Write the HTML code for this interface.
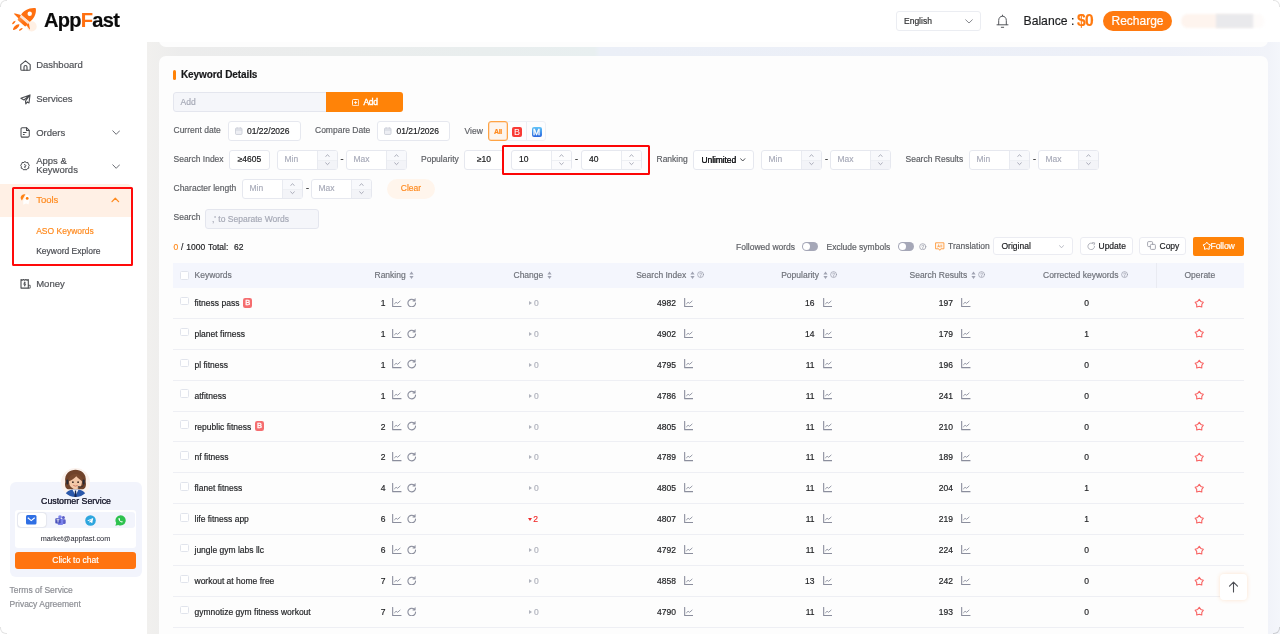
<!DOCTYPE html>
<html lang="en"><head><meta charset="utf-8"><title>AppFast - Keyword Details</title>
<style>
*{box-sizing:border-box;margin:0;padding:0}
html,body{width:1280px;height:634px;overflow:hidden;background:#fff}
body{font-family:"Liberation Sans",sans-serif;font-size:8.5px;color:#303133;position:relative;-webkit-font-smoothing:antialiased;-webkit-text-stroke:0.18px}
.abs,.abs>*{position:absolute}
#main{position:absolute;left:147px;top:42px;width:1133px;height:592px;background:linear-gradient(90deg,#f1f0ee 0,#ececec 3%,#e9eeee 30%,#e8eff0 39.5%,#ebeff7 40%,#edf0f8 90%,#f1f3f9 99%,#f4f6fb 100%)}
#prev{position:absolute;left:159px;top:36px;width:1109px;height:11px;background:#fdfdfd;border-radius:0 0 7px 7px}
#cardbg{position:absolute;left:159px;top:56px;width:1109px;height:600px;background:#fdfdfd;border-radius:7px 7px 0 0}
#card{position:absolute;left:160px;top:56px;width:1108px;height:600px}
#card>*{position:absolute}
#side{position:absolute;left:0;top:42px;width:147px;height:592px;background:#fff}
#side>*{position:absolute}
#head{position:absolute;left:0;top:0;width:1280px;height:42px;background:#fff}
#head>*{position:absolute}
#head,#side,#card{will-change:transform}
.mi{left:36.2px;font-size:9.5px;color:#505257;white-space:nowrap;line-height:11px}
.sub{left:36.2px;font-size:8.5px;color:#4a4c52;white-space:nowrap;line-height:10px}
.sic{left:20px;width:11px;height:11px;fill:none;stroke:#4a4c50;stroke-width:1.1;stroke-linecap:round;stroke-linejoin:round}
.chev{width:8.4px;height:5.4px;fill:none;stroke:#6a6c73;stroke-width:1.1;stroke-linecap:round;stroke-linejoin:round}
.lbl{color:#5d5f64;font-size:8.5px;line-height:10px;white-space:nowrap;margin-top:0.4px}
.box{border:1px solid #e6e8ef;border-radius:3px;background:#fff;height:20px;font-size:8.5px;line-height:17.2px;white-space:nowrap}
.ni{position:absolute;height:20px;border:1px solid #e6e8ef;border-radius:3px;background:#fff;font-size:8.5px;line-height:17.2px}
.ni .ph{position:absolute;left:6.5px;color:#a9acba}
.ni .val{position:absolute;left:7px;color:#17181a}
.ni .spin{position:absolute;right:0;top:0;width:20px;height:18px;border-left:1px solid #e9ebf1;background:#f8f9fc;border-radius:0 2px 2px 0}
.ni.wh .spin{background:#fdfdfe}
.ni.wh .spin:after{background:#fbfbfd}
.ni .spin:after{content:"";position:absolute;left:0;right:0;top:9px;height:8px;background:#f3f4f8;border-top:1px solid #eef0f4}
.ni .spin svg{position:absolute;z-index:1;left:7px;width:5px;height:3.4px;fill:none;stroke:#9497a6;stroke-width:0.95;stroke-linecap:round;stroke-linejoin:round}
.ni .spin svg:first-child{top:3px}
.ni .spin svg:last-child{top:11.2px}
.dash{font-size:9px;color:#303133;line-height:10px}
#th{left:13px;top:207px;width:1071px;height:25px;background:#f4f6fd;color:#6f727a;font-size:8.5px}
#th>*{position:absolute;top:6.8px;line-height:10px;white-space:nowrap}
.sort{display:inline-block;width:5px;height:8.5px;fill:#a0a3b2;vertical-align:-1.6px;margin-left:3.5px}
.q{display:inline-block;width:7.2px;height:7.2px;fill:none;stroke:#9497a5;stroke-width:0.75;stroke-linecap:round;vertical-align:-0.8px;margin-left:2.5px}
.tr{position:absolute;left:13px;width:1071px;height:30.89px;border-bottom:1px solid #eeeff4;font-size:8.5px}
.tr>*{position:absolute}
.cb{display:block;width:8.5px;height:8.5px;border:1px solid #e1e4ec;border-radius:1.5px;background:#fff}
.kw{left:21.5px;top:10px;line-height:10px;color:#1f2023;white-space:nowrap}
.num{top:10px;line-height:10px;color:#1f2023;white-space:nowrap}
.pi{top:9.7px;width:9.5px;height:9.5px}
.ic{display:block;width:9.5px;height:9.5px;fill:none;stroke:#8b8e9d;stroke-width:1.15;stroke-linecap:round;stroke-linejoin:round}
.ic.star{stroke:#f86464;stroke-width:1.05;width:10.5px;height:10.5px}
.chg{top:10px;line-height:10px;color:#b0b3bd;white-space:nowrap;padding-left:5px}
.chg.red{color:#f02d2d}
.tri{position:absolute;left:0;top:3px;border-left:3px solid #b0b3bd;border-top:2.2px solid transparent;border-bottom:2.2px solid transparent}
.trid{position:absolute;left:0;top:4px;border-top:3px solid #f02d2d;border-left:2.2px solid transparent;border-right:2.2px solid transparent}
.bb{display:inline-block;width:9.6px;height:10px;margin-left:3.5px;border-radius:2.2px;background:#f56d6f;color:#fff;font-size:7.5px;line-height:10.5px;text-align:center;font-weight:normal;-webkit-text-stroke:0.3px #fff;vertical-align:0px;position:relative;top:-1.3px}
.btn{border:1px solid #ebecf2;border-radius:3px;background:#fff;height:18px;font-size:8.5px;line-height:16px;color:#303133;white-space:nowrap}
.tog{width:16px;height:9px;border-radius:5px;background:#a5a7b7}
.tog:after{content:"";position:absolute;left:1px;top:1px;width:7px;height:7px;border-radius:50%;background:#fff}
</style></head><body>
<div id="main"></div>
<div id="prev"></div>
<div id="cardbg"></div>

<!-- ===== header ===== -->
<div id="head">
<svg style="left:11px;top:7px;width:26px;height:26px" viewBox="0 0 26 26">
<defs><linearGradient id="rg" x1="0" y1="0" x2="1" y2="1"><stop offset="0" stop-color="#ff9a55"/><stop offset="0.6" stop-color="#ff6f0f"/></linearGradient></defs>
<circle cx="20.6" cy="19.4" r="5.1" fill="#fff0e4"/>
<g fill="#ff6f0f">
<path d="M10.1 7.8C12.6 3.8 17.5 0.7 24 1.1C24.6 1.1 24.9 1.5 24.9 2.1C25.3 7.5 22.6 12.2 18.7 15.1Z"/>
<path d="M10.1 7.8L18.7 15.1L17.1 17.3L8.6 9.7Z" fill="#ffe3cf"/>
<path d="M8.6 9.7L17.1 17.3L14.6 19.2C14.2 19.5 13.8 19.4 13.5 19.1L6.9 13.2C6.6 12.9 6.6 12.5 6.9 12.1Z" fill="url(#rg)"/>
<path d="M2.8 6.7C3.2 6.3 3.8 6.4 4.4 6.5L10 8L7.8 11.8Z"/>
<path d="M15.4 17.9L17.9 16.3L18.9 21.8C19 22.6 18.5 22.7 18.1 22.1Z"/>
<path d="M1.2 17.2C0.8 16 2.8 13.8 4.6 13.7C4.7 15 2.7 17.2 1.2 17.2Z"/>
<path d="M2.1 22.9C1.5 20.8 5.4 16.8 8.3 17.3C8.9 19.5 4.8 23.3 2.1 22.9Z"/>
<path d="M8 23.8C7.8 22.6 9.9 20.9 11.6 21.1C11.7 22.4 9.6 24 8 23.8Z"/>
</g>
<circle cx="18.7" cy="6.7" r="2.2" fill="#fff"/>
</svg>
<div style="left:44px;top:6.5px;font-size:20px;line-height:26px;font-weight:bold;color:#0b0b0b;letter-spacing:-0.7px;white-space:nowrap">App<span style="color:#ff6f0f">F</span>ast</div>

<div class="box" style="left:896px;top:11px;width:85px;height:20px;border-radius:3px;border-color:#ebedf2"></div>
<div style="left:904px;top:15.5px;font-size:8.5px;line-height:10px;color:#303133">English</div>
<svg class="chev" style="left:964.5px;top:18.5px;width:8px;height:5px;stroke:#6a6c72;stroke-width:0.8" viewBox="0 0 8 5"><path d="M0.7 0.8L4 4L7.3 0.8"/></svg>
<svg style="left:995.5px;top:13.5px;width:13px;height:15px;fill:none;stroke:#55575c;stroke-width:1;stroke-linecap:round;stroke-linejoin:round" viewBox="0 0 13 15"><path d="M6.5 1.1V2M2.7 10.7V6.4C2.7 3.9 4.3 2.2 6.5 2.2S10.3 3.9 10.3 6.4V10.7M1 10.8H12M5.3 13.3H7.7"/></svg>
<div style="left:1023.5px;top:13.5px;font-size:12.2px;line-height:15px;color:#1d1e20;white-space:nowrap">Balance :</div>
<div style="left:1077px;top:12px;font-size:15.6px;line-height:18px;font-weight:bold;color:#ff7a10;white-space:nowrap;letter-spacing:-0.55px">$0</div>
<div style="left:1103px;top:11px;width:69px;height:20px;border-radius:10px;background:#ff7a10;color:#fff;font-size:12px;line-height:20px;text-align:center">Recharge</div>
<div style="left:1181px;top:14px;width:84px;height:14px;border-radius:7px;background:linear-gradient(90deg,#fef4ee 0,#fef4ee 42%,#fdf8f5 60%,#fefcfb 100%);filter:blur(1.2px)"></div>
<div style="left:1216px;top:13.5px;width:37px;height:14.5px;background:#e9e9ec;filter:blur(1px)"></div>
</div>

<!-- ===== sidebar ===== -->
<div id="side">
<svg class="sic" style="top:17.5px" viewBox="0 0 11 11"><path d="M0.8 4.7L5.5 0.8L10.2 4.7V9.2C10.2 9.9 9.8 10.3 9.1 10.3H1.9C1.2 10.3 0.8 9.9 0.8 9.2Z"/><path d="M4 10.2V6.9C4 5 7 5 7 6.9V10.2"/></svg>
<div class="mi" style="top:16.8px">Dashboard</div>
<svg class="sic" style="top:52px" viewBox="0 0 11 11"><path d="M10 0.9L0.9 4.3L4 6L9.8 1.1L5.5 7L5.8 10L7.3 7.9L9 9Z"/></svg>
<div class="mi" style="top:50.8px">Services</div>
<svg class="sic" style="top:85px;left:20.3px;width:10.2px;height:10.8px" preserveAspectRatio="none" viewBox="0 0 11 11"><path d="M2.4 0.7H7L10 3.5V9C10 9.8 9.5 10.3 8.7 10.3H2.4C1.6 10.3 1.1 9.8 1.1 9V2C1.1 1.2 1.6 0.7 2.4 0.7Z"/><path d="M7 0.9V3.5H9.8M3.6 5.6H6.6M3.6 7.6H4.6"/></svg>
<div class="mi" style="top:84.5px">Orders</div>
<svg class="chev" style="left:112px;top:88.2px" viewBox="0 0 9 6"><path d="M0.7 0.9L4.5 4.8L8.3 0.9"/></svg>
<svg class="sic" style="top:119px;left:20.4px;width:10px;height:10px" viewBox="0 0 11 11"><path d="M5.5 0.7L6.9 1.7L8.7 1.6L9.1 3.3L10.3 4.6L9.5 6.1L9.7 7.9L8 8.5L6.9 9.9L5.5 9.3L4.1 9.9L3 8.5L1.3 7.9L1.5 6.1L0.7 4.6L1.9 3.3L2.3 1.6L4.1 1.7Z"/><path d="M4.9 3.9C6.9 3.6 7.1 6.3 5.2 6.6M5.6 6.1L5 6.7L5.7 7.2"/></svg>
<div class="mi" style="top:114px;line-height:9.2px">Apps &amp;<br>Keywords</div>
<svg class="chev" style="left:112px;top:121.7px" viewBox="0 0 9 6"><path d="M0.7 0.9L4.5 4.8L8.3 0.9"/></svg>

<div style="left:0;top:141.5px;width:132px;height:33px;background:#fff0e5;border-radius:0 5px 0 0"></div>
<svg style="left:20px;top:151.5px;width:11px;height:12px" viewBox="0 0 11 12"><path d="M6.3 0.5C9.3 0.3 11 3.4 9.3 6.6L8.6 10.6L6 9.6L3.3 10.8L3.2 7Z" fill="#fff" opacity="0.9"/><path d="M5.4 0.3C1.5 -0.2 -1 3.6 1.9 6.4Z" fill="#ff8214"/><circle cx="7.2" cy="4.4" r="1.4" fill="#ff7a0a"/></svg>
<div class="mi" style="top:151.8px;color:#ff8a1e">Tools</div>
<svg class="chev" style="left:111.3px;top:155.2px;width:8.6px;height:5.5px;stroke:#ff8a1e;stroke-width:1.4" viewBox="0 0 9 6"><path d="M0.9 5L4.5 1.4L8.1 5"/></svg>
<div class="sub" style="top:184px;color:#ff8a1e">ASO Keywords</div>
<div class="sub" style="top:204px">Keyword Explore</div>
<div style="left:11.7px;top:145px;width:121px;height:78.5px;border:2px solid #ff0a0a;border-radius:1.5px"></div>

<svg class="sic" style="top:236px" viewBox="0 0 11 11"><path d="M1 1.5L2.2 2.3L3.4 1.5L4.65 2.3L5.9 1.5L7.1 2.3L8.3 1.5V10.1H1Z"/><path d="M5.6 4.9C5.2 4.3 3.8 4.4 3.8 5.2C3.8 6.1 5.6 5.7 5.6 6.7C5.6 7.5 4.1 7.6 3.7 6.9M4.7 4V8M8.5 7.3H10.2V10.1H8.3" stroke-width="0.85"/></svg>
<div class="mi" style="top:236px">Money</div>

<!-- customer service -->
<div style="left:10px;top:439.5px;width:132px;height:95.5px;border-radius:6px;background:#f2f4fc"></div>
<svg style="left:61px;top:425.8px;width:29px;height:29px" viewBox="0 0 29 29">
<defs><clipPath id="avc"><circle cx="14.5" cy="14.5" r="14.5"/></clipPath></defs>
<g clip-path="url(#avc)">
<rect width="29" height="29" fill="#fbf2ed"/>
<path d="M4.3 14C3 5 9.5 1.7 14.5 1.7S26 5 24.7 14C25.6 18 24.3 21.3 21 21.3H8C4.7 21.3 3.4 18 4.3 14Z" fill="#70432a"/>
<rect x="12.3" y="19" width="4.4" height="4.5" fill="#e6b291"/>
<path d="M3.5 30C4 23.5 8.5 21.6 14.5 21.6S25 23.5 25.5 30Z" fill="#2b58aa"/>
<path d="M11.4 21.6H17.6L14.5 27.5Z" fill="#f7f7fa"/>
<path d="M13.9 22.6H15.1L15.6 29H13.4Z" fill="#18264f"/>
<ellipse cx="14.5" cy="13.9" rx="6.5" ry="7.1" fill="#f4c8a8"/>
<path d="M7.6 13.2C7.6 8 11 6 14.5 6S21.4 8 21.4 13.2C19.5 12 17 10.5 15.3 8.3C13.5 10.5 10.5 12.5 7.6 13.2Z" fill="#7a4a2e"/>
<circle cx="11.9" cy="14.2" r="0.85" fill="#33211a"/><circle cx="17.1" cy="14.2" r="0.85" fill="#33211a"/>
<path d="M12.6 17.6Q14.5 18.9 16.4 17.6" stroke="#c2604f" stroke-width="0.7" fill="none" stroke-linecap="round"/>
<rect x="5.3" y="11.5" width="2" height="5" rx="1" fill="#2a2a33"/><rect x="21.7" y="11.5" width="2" height="5" rx="1" fill="#2a2a33"/>
<path d="M22.7 16.3Q22.5 19.3 18.5 19.1" stroke="#2a2a33" stroke-width="0.7" fill="none"/>
<ellipse cx="17.9" cy="19" rx="1.3" ry="0.8" fill="#1f1f27"/>
</g></svg>
<div style="left:9.5px;top:453.9px;width:133px;text-align:center;font-size:8.8px;line-height:11px;color:#14152a;white-space:nowrap;text-shadow:0 0 1px #fff, 0 0 0.3px #14152a">Customer Service</div>
<div style="left:15px;top:468px;width:121px;height:37.5px;border-radius:3px;background:#fff"></div>
<div style="left:16.5px;top:469.5px;width:118px;height:16px;border-radius:3px;background:#f2f4fc"></div>
<div style="left:17.5px;top:470.5px;width:28px;height:14.5px;border-radius:3px;background:#fff;box-shadow:0 0 1.5px rgba(0,0,0,.25)"></div>
<svg style="left:26px;top:473px;width:10.5px;height:9.5px" viewBox="0 0 10.5 9.5"><rect width="10.5" height="9.5" rx="1.5" fill="#2f6fe4"/><path d="M1.8 2.8L5.25 5.6L8.7 2.8" fill="none" stroke="#fff" stroke-width="1.1"/></svg>
<svg style="left:55px;top:472.5px;width:11px;height:10.5px" viewBox="0 0 11 10.5"><circle cx="8.4" cy="2.6" r="1.5" fill="#5b5fc7"/><circle cx="5" cy="2" r="1.8" fill="#7b83eb"/><rect x="6" y="4.3" width="4.7" height="4.8" rx="1.3" fill="#5b5fc7"/><rect x="2.6" y="4" width="5.6" height="6" rx="1.3" fill="#7b83eb"/><rect x="0.3" y="3.2" width="5.4" height="5.4" rx="0.8" fill="#4b53bc"/><path d="M1.6 4.7H4.4M3 4.7V7.5" stroke="#fff" stroke-width="0.8" fill="none"/></svg>
<svg style="left:84.5px;top:472.5px;width:11px;height:11px" viewBox="0 0 11 11"><circle cx="5.5" cy="5.5" r="5.3" fill="#2ea6de"/><path d="M2.2 5.4L8.2 3L7.2 8.2L5.4 6.9L4.5 7.8L4.4 6.4L7 4.1L3.7 6Z" fill="#fff"/></svg>
<svg style="left:114.5px;top:472.5px;width:11px;height:11px" viewBox="0 0 11 11"><path d="M5.6 0.3A5.1 5.1 0 0 0 1.2 8L0.4 10.7L3.2 9.9A5.1 5.1 0 1 0 5.6 0.3Z" fill="#2ec24f"/><path d="M3.8 3.1C3.3 3.5 3.3 4.4 4.3 5.7S6.6 7.7 7.4 7.3C7.9 7 7.9 6.6 7.5 6.4L6.8 6.1L6.4 6.5C5.8 6.3 5 5.5 4.8 4.9L5.1 4.5L4.7 3.4C4.5 3 4.1 2.9 3.8 3.1Z" fill="#fff"/></svg>
<div style="left:15px;top:491.7px;width:121px;text-align:center;font-size:7.3px;line-height:9px;color:#2c2d38;white-space:nowrap;-webkit-text-stroke:0.05px">market@appfast.com</div>
<div style="left:15px;top:510px;width:121px;height:17px;border-radius:3px;background:#ff7410;color:#fff;font-size:8.5px;line-height:16.5px;text-align:center">Click to chat</div>
<div style="left:9.5px;top:543px;font-size:8.5px;line-height:10px;color:#8c8e94;white-space:nowrap">Terms of Service</div>
<div style="left:9.5px;top:557px;font-size:8.5px;line-height:10px;color:#8c8e94;white-space:nowrap">Privacy Agreement</div>
</div>

<!-- ===== main card ===== -->
<div id="card">
<div style="left:13px;top:14px;width:3px;height:10px;border-radius:1.5px;background:#ff8208"></div>
<div style="left:21px;top:12.5px;font-size:10px;line-height:12px;font-weight:bold;color:#17181a;white-space:nowrap;letter-spacing:-0.1px">Keyword Details</div>

<div style="left:13px;top:36px;width:154px;height:20px;border:1px solid #e4e6ee;border-radius:3px 0 0 3px;background:#f5f6fa"></div>
<div style="left:20.5px;top:41px;font-size:8.5px;line-height:10px;color:#a6a9b6">Add</div>
<div style="left:166px;top:36px;width:77px;height:20px;border-radius:0 3px 3px 0;background:#ff8308"></div>
<svg style="left:191.8px;top:42.5px;width:7.2px;height:7.2px;fill:none;stroke:#fff;stroke-width:0.9" viewBox="0 0 7.2 7.2"><rect x="0.5" y="0.5" width="6.2" height="6.2" rx="1"/><path d="M3.6 2.1V5.1M2.1 3.6H5.1"/></svg>
<div style="left:203.5px;top:41.3px;font-size:8.5px;line-height:10px;color:#fff;letter-spacing:-0.3px;-webkit-text-stroke:0.4px #fff">Add</div>

<div class="lbl" style="left:13.5px;top:69px">Current date</div>
<div class="box" style="left:68px;top:65px;width:73px;height:20px"></div>
<svg class="cal" style="left:75.3px;top:71px;width:7.5px;height:8px" viewBox="0 0 7 7.5"><rect x="0.4" y="1" width="6.2" height="6" rx="1" fill="#eeeff4" stroke="#c3c6d1" stroke-width="0.7"/><path d="M0.5 2.8H6.5M2 0.3V1.5M5 0.3V1.5" stroke="#c3c6d1" stroke-width="0.7"/></svg>
<div style="left:87px;top:69.8px;font-size:8.5px;line-height:10px;color:#1c1d20">01/22/2026</div>
<div class="lbl" style="left:155px;top:69px">Compare Date</div>
<div class="box" style="left:217px;top:65px;width:73px;height:20px"></div>
<svg class="cal" style="left:224.3px;top:71px;width:7.5px;height:8px" viewBox="0 0 7 7.5"><rect x="0.4" y="1" width="6.2" height="6" rx="1" fill="#eeeff4" stroke="#c3c6d1" stroke-width="0.7"/><path d="M0.5 2.8H6.5M2 0.3V1.5M5 0.3V1.5" stroke="#c3c6d1" stroke-width="0.7"/></svg>
<div style="left:236.5px;top:69.8px;font-size:8.5px;line-height:10px;color:#1c1d20">01/21/2026</div>
<div class="lbl" style="left:304.5px;top:69.5px">View</div>
<div style="left:328px;top:65px;width:58px;height:20px;border:1px solid #eef0f5;border-radius:3px;background:#fdfdfe"></div>
<div style="left:347px;top:66px;width:1px;height:18px;background:#ebedf3"></div>
<div style="left:366px;top:66px;width:1px;height:18px;background:#ebedf3"></div>
<div style="left:328px;top:65px;width:20px;height:20px;border:1px solid #ffa445;border-radius:3px;background:#fdf5ee;box-shadow:inset 0 0 0 0.5px #ffc590;color:#ff8a1e;font-size:7px;font-weight:bold;line-height:20px;text-align:center;letter-spacing:-0.3px">All</div>
<div style="left:352px;top:71px;width:10px;height:10px;border-radius:2px;background:#f93b36;color:#fff;font-size:9px;line-height:10.5px;font-weight:normal;text-align:center;-webkit-text-stroke:0">B</div>
<div style="left:371.5px;top:71px;width:10px;height:10px;border-radius:2px;background:linear-gradient(180deg,#60c4f8,#2a66de);color:#fff;font-size:8.5px;line-height:10.5px;font-weight:normal;text-align:center;-webkit-text-stroke:0.3px #fff">M</div>

<div class="lbl" style="left:13.5px;top:98px">Search Index</div>
<div class="box" style="left:69px;top:94px;width:41px;height:20px;text-align:center;color:#17181a">≥4605</div>
<div class="ni" style="left:117px;top:94px;width:61px;height:20px"><span class="ph">Min</span><span class="spin"><svg viewBox="0 0 6 4"><path d="M0.8 3L3 0.9L5.2 3"/></svg><svg viewBox="0 0 6 4"><path d="M0.8 1L3 3.1L5.2 1"/></svg></span></div>
<div class="dash" style="left:180.5px;top:98px">-</div>
<div class="ni" style="left:186px;top:94px;width:61px;height:20px"><span class="ph">Max</span><span class="spin"><svg viewBox="0 0 6 4"><path d="M0.8 3L3 0.9L5.2 3"/></svg><svg viewBox="0 0 6 4"><path d="M0.8 1L3 3.1L5.2 1"/></svg></span></div>
<div class="lbl" style="left:261px;top:98px">Popularity</div>
<div class="box" style="left:304px;top:94px;width:40px;height:20px;text-align:center;color:#17181a">≥10</div>
<div style="left:342px;top:88.5px;width:147.5px;height:30px;border:2px solid #fc0606;border-radius:1.5px;background:#fdfdfe"></div>
<div class="ni wh" style="left:351px;top:94px;width:61px;height:20px"><span class="val">10</span><span class="spin"><svg viewBox="0 0 6 4"><path d="M0.8 3L3 0.9L5.2 3"/></svg><svg viewBox="0 0 6 4"><path d="M0.8 1L3 3.1L5.2 1"/></svg></span></div>
<div class="dash" style="left:415px;top:98px">-</div>
<div class="ni wh" style="left:421px;top:94px;width:61px;height:20px"><span class="val">40</span><span class="spin"><svg viewBox="0 0 6 4"><path d="M0.8 3L3 0.9L5.2 3"/></svg><svg viewBox="0 0 6 4"><path d="M0.8 1L3 3.1L5.2 1"/></svg></span></div>
<div class="lbl" style="left:496.5px;top:98px">Ranking</div>
<div class="box" style="left:533px;top:94px;width:61px;height:20px"></div>
<div style="left:541.5px;top:98.5px;font-size:8.5px;line-height:10px;color:#1c1d20;letter-spacing:-0.1px;text-shadow:0 0 0.3px #1c1d20">Unlimited</div>
<svg class="chev" style="left:580px;top:102px;width:5.5px;height:4px;stroke:#3c3e44;stroke-width:0.9" viewBox="0 0 5.5 4"><path d="M0.6 0.7L2.75 3L4.9 0.7"/></svg>
<div class="ni" style="left:601px;top:94px;width:61px;height:20px"><span class="ph">Min</span><span class="spin"><svg viewBox="0 0 6 4"><path d="M0.8 3L3 0.9L5.2 3"/></svg><svg viewBox="0 0 6 4"><path d="M0.8 1L3 3.1L5.2 1"/></svg></span></div>
<div class="dash" style="left:665px;top:98px">-</div>
<div class="ni" style="left:670px;top:94px;width:61px;height:20px"><span class="ph">Max</span><span class="spin"><svg viewBox="0 0 6 4"><path d="M0.8 3L3 0.9L5.2 3"/></svg><svg viewBox="0 0 6 4"><path d="M0.8 1L3 3.1L5.2 1"/></svg></span></div>
<div class="lbl" style="left:745.5px;top:98px">Search Results</div>
<div class="ni" style="left:809px;top:94px;width:61px;height:20px"><span class="ph">Min</span><span class="spin"><svg viewBox="0 0 6 4"><path d="M0.8 3L3 0.9L5.2 3"/></svg><svg viewBox="0 0 6 4"><path d="M0.8 1L3 3.1L5.2 1"/></svg></span></div>
<div class="dash" style="left:873px;top:98px">-</div>
<div class="ni" style="left:878px;top:94px;width:61px;height:20px"><span class="ph">Max</span><span class="spin"><svg viewBox="0 0 6 4"><path d="M0.8 3L3 0.9L5.2 3"/></svg><svg viewBox="0 0 6 4"><path d="M0.8 1L3 3.1L5.2 1"/></svg></span></div>

<div class="lbl" style="left:13.5px;top:127px">Character length</div>
<div class="ni" style="left:82px;top:123px;width:61px;height:20px"><span class="ph">Min</span><span class="spin"><svg viewBox="0 0 6 4"><path d="M0.8 3L3 0.9L5.2 3"/></svg><svg viewBox="0 0 6 4"><path d="M0.8 1L3 3.1L5.2 1"/></svg></span></div>
<div class="dash" style="left:146px;top:127px">-</div>
<div class="ni" style="left:151px;top:123px;width:61px;height:20px"><span class="ph">Max</span><span class="spin"><svg viewBox="0 0 6 4"><path d="M0.8 3L3 0.9L5.2 3"/></svg><svg viewBox="0 0 6 4"><path d="M0.8 1L3 3.1L5.2 1"/></svg></span></div>
<div style="left:227px;top:122.5px;width:48px;height:20px;border-radius:10px;background:#fff5ec;color:#ff8a1e;font-size:8.5px;line-height:19px;text-align:center">Clear</div>

<div class="lbl" style="left:13.5px;top:156px">Search</div>
<div style="left:45px;top:153px;width:114px;height:20px;border:1px solid #e4e6ee;border-radius:3px;background:#f5f6fa"></div>
<div style="left:52px;top:157.5px;font-size:8.5px;line-height:10px;color:#a6a9b6;white-space:nowrap">,' to Separate Words</div>

<div style="left:13.5px;top:185.5px;font-size:8.5px;line-height:10px;color:#1c1d20;white-space:nowrap;word-spacing:0.4px;letter-spacing:0.03px"><span style="color:#ff8a1e">0</span> / 1000 Total:&nbsp; 62</div>

<div class="lbl" style="left:576px;top:185.5px">Followed words</div>
<div class="tog" style="left:642px;top:186px"></div>
<div class="lbl" style="left:666.5px;top:185.5px">Exclude symbols</div>
<div class="tog" style="left:737.5px;top:186px"></div>
<svg class="q" style="left:759px;top:186.5px;margin:0;width:7.5px;height:7.5px" viewBox="0 0 8 8"><circle cx="4" cy="4" r="3.3"/><path d="M2.9 3.2C2.9 2 5.1 2 5.1 3.2C5.1 4 4 4 4 4.9M4 5.7V6.1"/></svg>
<svg style="left:775px;top:185.5px;width:9.5px;height:9.5px;fill:none;stroke:#ff8a1e;stroke-width:0.8;stroke-linejoin:round" viewBox="0 0 9.5 9.5"><path d="M0.6 0.8H8.9V6.8H5.8L4.75 8.3L3.7 6.8H0.6Z"/><path d="M2.6 5.4L3.6 2.6L4.6 5.4M2.9 4.5H4.3M5.8 2.6V5.4M6.8 2.6V5.4" stroke-width="0.6"/></svg>
<div class="lbl" style="left:788px;top:184.5px">Translation</div>
<div class="btn" style="left:833px;top:181px;width:80px;height:18px"></div>
<div style="left:841.5px;top:184.5px;font-size:8.5px;line-height:10px;color:#1c1d20;white-space:nowrap">Original</div>
<svg class="chev" style="left:898.5px;top:188.5px;width:5px;height:3.5px;stroke:#a9acb8;stroke-width:0.8" viewBox="0 0 5 3.5"><path d="M0.5 0.6L2.5 2.8L4.5 0.6"/></svg>
<div class="btn" style="left:920px;top:181px;width:53px;height:18px"></div>
<svg style="left:927px;top:185.5px;width:8.5px;height:8.5px;fill:none;stroke:#8e919c;stroke-width:0.8;stroke-linecap:round;stroke-linejoin:round" viewBox="0 0 10 10"><path d="M8.9 5.2A3.9 3.9 0 1 1 7.2 1.9"/><path d="M6.6 0.6L9.2 1.1L8.3 3.5"/></svg>
<div style="left:938.5px;top:185px;font-size:8.5px;line-height:10px;color:#1c1d20">Update</div>
<div class="btn" style="left:979px;top:181px;width:47px;height:18px"></div>
<svg style="left:987px;top:185px;width:9px;height:9px;fill:none;stroke:#8e919c;stroke-width:0.8;stroke-linejoin:round" viewBox="0 0 9 9"><rect x="0.6" y="0.6" width="5" height="5" rx="1"/><rect x="3.4" y="3.4" width="5" height="5" rx="1" fill="#fff"/></svg>
<div style="left:999.5px;top:185px;font-size:8.5px;line-height:10px;color:#1c1d20">Copy</div>
<div style="left:1033px;top:180.5px;width:51px;height:19.5px;border-radius:2px;background:#ff8308"></div>
<svg style="left:1041.7px;top:184.8px;width:9.7px;height:9.7px;fill:none;stroke:#fff;stroke-width:1;stroke-linejoin:round" viewBox="0 0 10 10"><path d="M5 1.2L6.5 3.24L8.9 4.03L7.43 6.09L7.41 8.62L5 7.85L2.59 8.62L2.57 6.09L1.1 4.03L3.5 3.24Z"/></svg>
<div style="left:1050.5px;top:185px;font-size:8.7px;line-height:10px;color:#fff;letter-spacing:-0.15px">Follow</div>

<div id="th">
<i class="cb" style="left:7px;top:8px"></i>
<span style="left:21.5px">Keywords</span>
<span style="left:201.5px">Ranking<svg class="sort" viewBox="0 0 5 8.5"><path d="M2.5 0.5L4.6 3.5H0.4Z M2.5 8L4.6 5H0.4Z"/></svg></span>
<span style="left:340.5px">Change<svg class="sort" viewBox="0 0 5 8.5"><path d="M2.5 0.5L4.6 3.5H0.4Z M2.5 8L4.6 5H0.4Z"/></svg></span>
<span style="left:463.2px">Search Index<svg class="sort" viewBox="0 0 5 8.5"><path d="M2.5 0.5L4.6 3.5H0.4Z M2.5 8L4.6 5H0.4Z"/></svg><svg class="q" viewBox="0 0 8 8"><circle cx="4" cy="4" r="3.3"/><path d="M2.9 3.2C2.9 2 5.1 2 5.1 3.2C5.1 4 4 4 4 4.9M4 5.7V6.1"/></svg></span>
<span style="left:608.2px">Popularity<svg class="sort" viewBox="0 0 5 8.5"><path d="M2.5 0.5L4.6 3.5H0.4Z M2.5 8L4.6 5H0.4Z"/></svg><svg class="q" viewBox="0 0 8 8"><circle cx="4" cy="4" r="3.3"/><path d="M2.9 3.2C2.9 2 5.1 2 5.1 3.2C5.1 4 4 4 4 4.9M4 5.7V6.1"/></svg></span>
<span style="left:736.5px">Search Results<svg class="sort" viewBox="0 0 5 8.5"><path d="M2.5 0.5L4.6 3.5H0.4Z M2.5 8L4.6 5H0.4Z"/></svg><svg class="q" viewBox="0 0 8 8"><circle cx="4" cy="4" r="3.3"/><path d="M2.9 3.2C2.9 2 5.1 2 5.1 3.2C5.1 4 4 4 4 4.9M4 5.7V6.1"/></svg></span>
<span style="left:870px">Corrected keywords<svg class="q" viewBox="0 0 8 8"><circle cx="4" cy="4" r="3.3"/><path d="M2.9 3.2C2.9 2 5.1 2 5.1 3.2C5.1 4 4 4 4 4.9M4 5.7V6.1"/></svg></span>
<span style="left:982.5px;top:0;width:1px;height:25px;background:#e9ebf2"></span>
<span style="left:1011.5px">Operate</span>
</div>
<div class="tr" style="top:232px">
<i class="cb" style="left:7px;top:8.8px"></i><span class="kw">fitness pass<span class="bb">B</span></span>
<span class="num" style="right:858.5px">1</span><span class="pi" style="left:219px"><svg class="ic chart" viewBox="0 0 10 10"><path d="M0.7 0.4V9.1H9.5" /><path d="M2.7 6L4.3 4.5L5.9 5.6L8.5 3.3" stroke-width="0.95"/></svg></span><span class="pi" style="left:234px"><svg class="ic refresh" viewBox="0 0 10 10"><path d="M9 5.3A4 4 0 1 1 7.6 2.3" /><path d="M8.7 0.9V3.3H6.3Z" fill="#8b8e9d" stroke-width="0.6"/></svg></span>
<span class="chg" style="left:356px"><i class="tri"></i>0</span>
<span class="num" style="right:568px">4982</span><span class="pi" style="left:510.5px"><svg class="ic chart" viewBox="0 0 10 10"><path d="M0.7 0.4V9.1H9.5" /><path d="M2.7 6L4.3 4.5L5.9 5.6L8.5 3.3" stroke-width="0.95"/></svg></span>
<span class="num" style="right:429.5px">16</span><span class="pi" style="left:649.5px"><svg class="ic chart" viewBox="0 0 10 10"><path d="M0.7 0.4V9.1H9.5" /><path d="M2.7 6L4.3 4.5L5.9 5.6L8.5 3.3" stroke-width="0.95"/></svg></span>
<span class="num" style="right:291px">197</span><span class="pi" style="left:788px"><svg class="ic chart" viewBox="0 0 10 10"><path d="M0.7 0.4V9.1H9.5" /><path d="M2.7 6L4.3 4.5L5.9 5.6L8.5 3.3" stroke-width="0.95"/></svg></span>
<span class="num" style="left:903.5px;width:20px;text-align:center">0</span>
<span class="pi" style="left:1020.8px;top:9.6px"><svg class="ic star" viewBox="0 0 10 10"><path d="M5 1.2L6.5 3.24L8.9 4.03L7.43 6.09L7.41 8.62L5 7.85L2.59 8.62L2.57 6.09L1.1 4.03L3.5 3.24Z" /></svg></span>
</div><div class="tr" style="top:262.89px">
<i class="cb" style="left:7px;top:8.8px"></i><span class="kw">planet firness</span>
<span class="num" style="right:858.5px">1</span><span class="pi" style="left:219px"><svg class="ic chart" viewBox="0 0 10 10"><path d="M0.7 0.4V9.1H9.5" /><path d="M2.7 6L4.3 4.5L5.9 5.6L8.5 3.3" stroke-width="0.95"/></svg></span><span class="pi" style="left:234px"><svg class="ic refresh" viewBox="0 0 10 10"><path d="M9 5.3A4 4 0 1 1 7.6 2.3" /><path d="M8.7 0.9V3.3H6.3Z" fill="#8b8e9d" stroke-width="0.6"/></svg></span>
<span class="chg" style="left:356px"><i class="tri"></i>0</span>
<span class="num" style="right:568px">4902</span><span class="pi" style="left:510.5px"><svg class="ic chart" viewBox="0 0 10 10"><path d="M0.7 0.4V9.1H9.5" /><path d="M2.7 6L4.3 4.5L5.9 5.6L8.5 3.3" stroke-width="0.95"/></svg></span>
<span class="num" style="right:429.5px">14</span><span class="pi" style="left:649.5px"><svg class="ic chart" viewBox="0 0 10 10"><path d="M0.7 0.4V9.1H9.5" /><path d="M2.7 6L4.3 4.5L5.9 5.6L8.5 3.3" stroke-width="0.95"/></svg></span>
<span class="num" style="right:291px">179</span><span class="pi" style="left:788px"><svg class="ic chart" viewBox="0 0 10 10"><path d="M0.7 0.4V9.1H9.5" /><path d="M2.7 6L4.3 4.5L5.9 5.6L8.5 3.3" stroke-width="0.95"/></svg></span>
<span class="num" style="left:903.5px;width:20px;text-align:center">1</span>
<span class="pi" style="left:1020.8px;top:9.6px"><svg class="ic star" viewBox="0 0 10 10"><path d="M5 1.2L6.5 3.24L8.9 4.03L7.43 6.09L7.41 8.62L5 7.85L2.59 8.62L2.57 6.09L1.1 4.03L3.5 3.24Z" /></svg></span>
</div><div class="tr" style="top:293.78px">
<i class="cb" style="left:7px;top:8.8px"></i><span class="kw">pl fitness</span>
<span class="num" style="right:858.5px">1</span><span class="pi" style="left:219px"><svg class="ic chart" viewBox="0 0 10 10"><path d="M0.7 0.4V9.1H9.5" /><path d="M2.7 6L4.3 4.5L5.9 5.6L8.5 3.3" stroke-width="0.95"/></svg></span><span class="pi" style="left:234px"><svg class="ic refresh" viewBox="0 0 10 10"><path d="M9 5.3A4 4 0 1 1 7.6 2.3" /><path d="M8.7 0.9V3.3H6.3Z" fill="#8b8e9d" stroke-width="0.6"/></svg></span>
<span class="chg" style="left:356px"><i class="tri"></i>0</span>
<span class="num" style="right:568px">4795</span><span class="pi" style="left:510.5px"><svg class="ic chart" viewBox="0 0 10 10"><path d="M0.7 0.4V9.1H9.5" /><path d="M2.7 6L4.3 4.5L5.9 5.6L8.5 3.3" stroke-width="0.95"/></svg></span>
<span class="num" style="right:429.5px">11</span><span class="pi" style="left:649.5px"><svg class="ic chart" viewBox="0 0 10 10"><path d="M0.7 0.4V9.1H9.5" /><path d="M2.7 6L4.3 4.5L5.9 5.6L8.5 3.3" stroke-width="0.95"/></svg></span>
<span class="num" style="right:291px">196</span><span class="pi" style="left:788px"><svg class="ic chart" viewBox="0 0 10 10"><path d="M0.7 0.4V9.1H9.5" /><path d="M2.7 6L4.3 4.5L5.9 5.6L8.5 3.3" stroke-width="0.95"/></svg></span>
<span class="num" style="left:903.5px;width:20px;text-align:center">0</span>
<span class="pi" style="left:1020.8px;top:9.6px"><svg class="ic star" viewBox="0 0 10 10"><path d="M5 1.2L6.5 3.24L8.9 4.03L7.43 6.09L7.41 8.62L5 7.85L2.59 8.62L2.57 6.09L1.1 4.03L3.5 3.24Z" /></svg></span>
</div><div class="tr" style="top:324.67px">
<i class="cb" style="left:7px;top:8.8px"></i><span class="kw">atfitness</span>
<span class="num" style="right:858.5px">1</span><span class="pi" style="left:219px"><svg class="ic chart" viewBox="0 0 10 10"><path d="M0.7 0.4V9.1H9.5" /><path d="M2.7 6L4.3 4.5L5.9 5.6L8.5 3.3" stroke-width="0.95"/></svg></span><span class="pi" style="left:234px"><svg class="ic refresh" viewBox="0 0 10 10"><path d="M9 5.3A4 4 0 1 1 7.6 2.3" /><path d="M8.7 0.9V3.3H6.3Z" fill="#8b8e9d" stroke-width="0.6"/></svg></span>
<span class="chg" style="left:356px"><i class="tri"></i>0</span>
<span class="num" style="right:568px">4786</span><span class="pi" style="left:510.5px"><svg class="ic chart" viewBox="0 0 10 10"><path d="M0.7 0.4V9.1H9.5" /><path d="M2.7 6L4.3 4.5L5.9 5.6L8.5 3.3" stroke-width="0.95"/></svg></span>
<span class="num" style="right:429.5px">11</span><span class="pi" style="left:649.5px"><svg class="ic chart" viewBox="0 0 10 10"><path d="M0.7 0.4V9.1H9.5" /><path d="M2.7 6L4.3 4.5L5.9 5.6L8.5 3.3" stroke-width="0.95"/></svg></span>
<span class="num" style="right:291px">241</span><span class="pi" style="left:788px"><svg class="ic chart" viewBox="0 0 10 10"><path d="M0.7 0.4V9.1H9.5" /><path d="M2.7 6L4.3 4.5L5.9 5.6L8.5 3.3" stroke-width="0.95"/></svg></span>
<span class="num" style="left:903.5px;width:20px;text-align:center">0</span>
<span class="pi" style="left:1020.8px;top:9.6px"><svg class="ic star" viewBox="0 0 10 10"><path d="M5 1.2L6.5 3.24L8.9 4.03L7.43 6.09L7.41 8.62L5 7.85L2.59 8.62L2.57 6.09L1.1 4.03L3.5 3.24Z" /></svg></span>
</div><div class="tr" style="top:355.56px">
<i class="cb" style="left:7px;top:8.8px"></i><span class="kw">republic fitness<span class="bb">B</span></span>
<span class="num" style="right:858.5px">2</span><span class="pi" style="left:219px"><svg class="ic chart" viewBox="0 0 10 10"><path d="M0.7 0.4V9.1H9.5" /><path d="M2.7 6L4.3 4.5L5.9 5.6L8.5 3.3" stroke-width="0.95"/></svg></span><span class="pi" style="left:234px"><svg class="ic refresh" viewBox="0 0 10 10"><path d="M9 5.3A4 4 0 1 1 7.6 2.3" /><path d="M8.7 0.9V3.3H6.3Z" fill="#8b8e9d" stroke-width="0.6"/></svg></span>
<span class="chg" style="left:356px"><i class="tri"></i>0</span>
<span class="num" style="right:568px">4805</span><span class="pi" style="left:510.5px"><svg class="ic chart" viewBox="0 0 10 10"><path d="M0.7 0.4V9.1H9.5" /><path d="M2.7 6L4.3 4.5L5.9 5.6L8.5 3.3" stroke-width="0.95"/></svg></span>
<span class="num" style="right:429.5px">11</span><span class="pi" style="left:649.5px"><svg class="ic chart" viewBox="0 0 10 10"><path d="M0.7 0.4V9.1H9.5" /><path d="M2.7 6L4.3 4.5L5.9 5.6L8.5 3.3" stroke-width="0.95"/></svg></span>
<span class="num" style="right:291px">210</span><span class="pi" style="left:788px"><svg class="ic chart" viewBox="0 0 10 10"><path d="M0.7 0.4V9.1H9.5" /><path d="M2.7 6L4.3 4.5L5.9 5.6L8.5 3.3" stroke-width="0.95"/></svg></span>
<span class="num" style="left:903.5px;width:20px;text-align:center">0</span>
<span class="pi" style="left:1020.8px;top:9.6px"><svg class="ic star" viewBox="0 0 10 10"><path d="M5 1.2L6.5 3.24L8.9 4.03L7.43 6.09L7.41 8.62L5 7.85L2.59 8.62L2.57 6.09L1.1 4.03L3.5 3.24Z" /></svg></span>
</div><div class="tr" style="top:386.45px">
<i class="cb" style="left:7px;top:8.8px"></i><span class="kw">nf fitness</span>
<span class="num" style="right:858.5px">2</span><span class="pi" style="left:219px"><svg class="ic chart" viewBox="0 0 10 10"><path d="M0.7 0.4V9.1H9.5" /><path d="M2.7 6L4.3 4.5L5.9 5.6L8.5 3.3" stroke-width="0.95"/></svg></span><span class="pi" style="left:234px"><svg class="ic refresh" viewBox="0 0 10 10"><path d="M9 5.3A4 4 0 1 1 7.6 2.3" /><path d="M8.7 0.9V3.3H6.3Z" fill="#8b8e9d" stroke-width="0.6"/></svg></span>
<span class="chg" style="left:356px"><i class="tri"></i>0</span>
<span class="num" style="right:568px">4789</span><span class="pi" style="left:510.5px"><svg class="ic chart" viewBox="0 0 10 10"><path d="M0.7 0.4V9.1H9.5" /><path d="M2.7 6L4.3 4.5L5.9 5.6L8.5 3.3" stroke-width="0.95"/></svg></span>
<span class="num" style="right:429.5px">11</span><span class="pi" style="left:649.5px"><svg class="ic chart" viewBox="0 0 10 10"><path d="M0.7 0.4V9.1H9.5" /><path d="M2.7 6L4.3 4.5L5.9 5.6L8.5 3.3" stroke-width="0.95"/></svg></span>
<span class="num" style="right:291px">189</span><span class="pi" style="left:788px"><svg class="ic chart" viewBox="0 0 10 10"><path d="M0.7 0.4V9.1H9.5" /><path d="M2.7 6L4.3 4.5L5.9 5.6L8.5 3.3" stroke-width="0.95"/></svg></span>
<span class="num" style="left:903.5px;width:20px;text-align:center">0</span>
<span class="pi" style="left:1020.8px;top:9.6px"><svg class="ic star" viewBox="0 0 10 10"><path d="M5 1.2L6.5 3.24L8.9 4.03L7.43 6.09L7.41 8.62L5 7.85L2.59 8.62L2.57 6.09L1.1 4.03L3.5 3.24Z" /></svg></span>
</div><div class="tr" style="top:417.34px">
<i class="cb" style="left:7px;top:8.8px"></i><span class="kw">flanet fitness</span>
<span class="num" style="right:858.5px">4</span><span class="pi" style="left:219px"><svg class="ic chart" viewBox="0 0 10 10"><path d="M0.7 0.4V9.1H9.5" /><path d="M2.7 6L4.3 4.5L5.9 5.6L8.5 3.3" stroke-width="0.95"/></svg></span><span class="pi" style="left:234px"><svg class="ic refresh" viewBox="0 0 10 10"><path d="M9 5.3A4 4 0 1 1 7.6 2.3" /><path d="M8.7 0.9V3.3H6.3Z" fill="#8b8e9d" stroke-width="0.6"/></svg></span>
<span class="chg" style="left:356px"><i class="tri"></i>0</span>
<span class="num" style="right:568px">4805</span><span class="pi" style="left:510.5px"><svg class="ic chart" viewBox="0 0 10 10"><path d="M0.7 0.4V9.1H9.5" /><path d="M2.7 6L4.3 4.5L5.9 5.6L8.5 3.3" stroke-width="0.95"/></svg></span>
<span class="num" style="right:429.5px">11</span><span class="pi" style="left:649.5px"><svg class="ic chart" viewBox="0 0 10 10"><path d="M0.7 0.4V9.1H9.5" /><path d="M2.7 6L4.3 4.5L5.9 5.6L8.5 3.3" stroke-width="0.95"/></svg></span>
<span class="num" style="right:291px">204</span><span class="pi" style="left:788px"><svg class="ic chart" viewBox="0 0 10 10"><path d="M0.7 0.4V9.1H9.5" /><path d="M2.7 6L4.3 4.5L5.9 5.6L8.5 3.3" stroke-width="0.95"/></svg></span>
<span class="num" style="left:903.5px;width:20px;text-align:center">1</span>
<span class="pi" style="left:1020.8px;top:9.6px"><svg class="ic star" viewBox="0 0 10 10"><path d="M5 1.2L6.5 3.24L8.9 4.03L7.43 6.09L7.41 8.62L5 7.85L2.59 8.62L2.57 6.09L1.1 4.03L3.5 3.24Z" /></svg></span>
</div><div class="tr" style="top:448.23px">
<i class="cb" style="left:7px;top:8.8px"></i><span class="kw">life fitness app</span>
<span class="num" style="right:858.5px">6</span><span class="pi" style="left:219px"><svg class="ic chart" viewBox="0 0 10 10"><path d="M0.7 0.4V9.1H9.5" /><path d="M2.7 6L4.3 4.5L5.9 5.6L8.5 3.3" stroke-width="0.95"/></svg></span><span class="pi" style="left:234px"><svg class="ic refresh" viewBox="0 0 10 10"><path d="M9 5.3A4 4 0 1 1 7.6 2.3" /><path d="M8.7 0.9V3.3H6.3Z" fill="#8b8e9d" stroke-width="0.6"/></svg></span>
<span class="chg red" style="left:355.3px"><i class="trid"></i>2</span>
<span class="num" style="right:568px">4807</span><span class="pi" style="left:510.5px"><svg class="ic chart" viewBox="0 0 10 10"><path d="M0.7 0.4V9.1H9.5" /><path d="M2.7 6L4.3 4.5L5.9 5.6L8.5 3.3" stroke-width="0.95"/></svg></span>
<span class="num" style="right:429.5px">11</span><span class="pi" style="left:649.5px"><svg class="ic chart" viewBox="0 0 10 10"><path d="M0.7 0.4V9.1H9.5" /><path d="M2.7 6L4.3 4.5L5.9 5.6L8.5 3.3" stroke-width="0.95"/></svg></span>
<span class="num" style="right:291px">219</span><span class="pi" style="left:788px"><svg class="ic chart" viewBox="0 0 10 10"><path d="M0.7 0.4V9.1H9.5" /><path d="M2.7 6L4.3 4.5L5.9 5.6L8.5 3.3" stroke-width="0.95"/></svg></span>
<span class="num" style="left:903.5px;width:20px;text-align:center">1</span>
<span class="pi" style="left:1020.8px;top:9.6px"><svg class="ic star" viewBox="0 0 10 10"><path d="M5 1.2L6.5 3.24L8.9 4.03L7.43 6.09L7.41 8.62L5 7.85L2.59 8.62L2.57 6.09L1.1 4.03L3.5 3.24Z" /></svg></span>
</div><div class="tr" style="top:479.12px">
<i class="cb" style="left:7px;top:8.8px"></i><span class="kw">jungle gym labs llc</span>
<span class="num" style="right:858.5px">6</span><span class="pi" style="left:219px"><svg class="ic chart" viewBox="0 0 10 10"><path d="M0.7 0.4V9.1H9.5" /><path d="M2.7 6L4.3 4.5L5.9 5.6L8.5 3.3" stroke-width="0.95"/></svg></span><span class="pi" style="left:234px"><svg class="ic refresh" viewBox="0 0 10 10"><path d="M9 5.3A4 4 0 1 1 7.6 2.3" /><path d="M8.7 0.9V3.3H6.3Z" fill="#8b8e9d" stroke-width="0.6"/></svg></span>
<span class="chg" style="left:356px"><i class="tri"></i>0</span>
<span class="num" style="right:568px">4792</span><span class="pi" style="left:510.5px"><svg class="ic chart" viewBox="0 0 10 10"><path d="M0.7 0.4V9.1H9.5" /><path d="M2.7 6L4.3 4.5L5.9 5.6L8.5 3.3" stroke-width="0.95"/></svg></span>
<span class="num" style="right:429.5px">11</span><span class="pi" style="left:649.5px"><svg class="ic chart" viewBox="0 0 10 10"><path d="M0.7 0.4V9.1H9.5" /><path d="M2.7 6L4.3 4.5L5.9 5.6L8.5 3.3" stroke-width="0.95"/></svg></span>
<span class="num" style="right:291px">224</span><span class="pi" style="left:788px"><svg class="ic chart" viewBox="0 0 10 10"><path d="M0.7 0.4V9.1H9.5" /><path d="M2.7 6L4.3 4.5L5.9 5.6L8.5 3.3" stroke-width="0.95"/></svg></span>
<span class="num" style="left:903.5px;width:20px;text-align:center">0</span>
<span class="pi" style="left:1020.8px;top:9.6px"><svg class="ic star" viewBox="0 0 10 10"><path d="M5 1.2L6.5 3.24L8.9 4.03L7.43 6.09L7.41 8.62L5 7.85L2.59 8.62L2.57 6.09L1.1 4.03L3.5 3.24Z" /></svg></span>
</div><div class="tr" style="top:510.01px">
<i class="cb" style="left:7px;top:8.8px"></i><span class="kw">workout at home free</span>
<span class="num" style="right:858.5px">7</span><span class="pi" style="left:219px"><svg class="ic chart" viewBox="0 0 10 10"><path d="M0.7 0.4V9.1H9.5" /><path d="M2.7 6L4.3 4.5L5.9 5.6L8.5 3.3" stroke-width="0.95"/></svg></span><span class="pi" style="left:234px"><svg class="ic refresh" viewBox="0 0 10 10"><path d="M9 5.3A4 4 0 1 1 7.6 2.3" /><path d="M8.7 0.9V3.3H6.3Z" fill="#8b8e9d" stroke-width="0.6"/></svg></span>
<span class="chg" style="left:356px"><i class="tri"></i>0</span>
<span class="num" style="right:568px">4858</span><span class="pi" style="left:510.5px"><svg class="ic chart" viewBox="0 0 10 10"><path d="M0.7 0.4V9.1H9.5" /><path d="M2.7 6L4.3 4.5L5.9 5.6L8.5 3.3" stroke-width="0.95"/></svg></span>
<span class="num" style="right:429.5px">13</span><span class="pi" style="left:649.5px"><svg class="ic chart" viewBox="0 0 10 10"><path d="M0.7 0.4V9.1H9.5" /><path d="M2.7 6L4.3 4.5L5.9 5.6L8.5 3.3" stroke-width="0.95"/></svg></span>
<span class="num" style="right:291px">242</span><span class="pi" style="left:788px"><svg class="ic chart" viewBox="0 0 10 10"><path d="M0.7 0.4V9.1H9.5" /><path d="M2.7 6L4.3 4.5L5.9 5.6L8.5 3.3" stroke-width="0.95"/></svg></span>
<span class="num" style="left:903.5px;width:20px;text-align:center">0</span>
<span class="pi" style="left:1020.8px;top:9.6px"><svg class="ic star" viewBox="0 0 10 10"><path d="M5 1.2L6.5 3.24L8.9 4.03L7.43 6.09L7.41 8.62L5 7.85L2.59 8.62L2.57 6.09L1.1 4.03L3.5 3.24Z" /></svg></span>
</div><div class="tr" style="top:540.9px">
<i class="cb" style="left:7px;top:8.8px"></i><span class="kw">gymnotize gym fitness workout</span>
<span class="num" style="right:858.5px">7</span><span class="pi" style="left:219px"><svg class="ic chart" viewBox="0 0 10 10"><path d="M0.7 0.4V9.1H9.5" /><path d="M2.7 6L4.3 4.5L5.9 5.6L8.5 3.3" stroke-width="0.95"/></svg></span><span class="pi" style="left:234px"><svg class="ic refresh" viewBox="0 0 10 10"><path d="M9 5.3A4 4 0 1 1 7.6 2.3" /><path d="M8.7 0.9V3.3H6.3Z" fill="#8b8e9d" stroke-width="0.6"/></svg></span>
<span class="chg" style="left:356px"><i class="tri"></i>0</span>
<span class="num" style="right:568px">4790</span><span class="pi" style="left:510.5px"><svg class="ic chart" viewBox="0 0 10 10"><path d="M0.7 0.4V9.1H9.5" /><path d="M2.7 6L4.3 4.5L5.9 5.6L8.5 3.3" stroke-width="0.95"/></svg></span>
<span class="num" style="right:429.5px">11</span><span class="pi" style="left:649.5px"><svg class="ic chart" viewBox="0 0 10 10"><path d="M0.7 0.4V9.1H9.5" /><path d="M2.7 6L4.3 4.5L5.9 5.6L8.5 3.3" stroke-width="0.95"/></svg></span>
<span class="num" style="right:291px">193</span><span class="pi" style="left:788px"><svg class="ic chart" viewBox="0 0 10 10"><path d="M0.7 0.4V9.1H9.5" /><path d="M2.7 6L4.3 4.5L5.9 5.6L8.5 3.3" stroke-width="0.95"/></svg></span>
<span class="num" style="left:903.5px;width:20px;text-align:center">0</span>
<span class="pi" style="left:1020.8px;top:9.6px"><svg class="ic star" viewBox="0 0 10 10"><path d="M5 1.2L6.5 3.24L8.9 4.03L7.43 6.09L7.41 8.62L5 7.85L2.59 8.62L2.57 6.09L1.1 4.03L3.5 3.24Z" /></svg></span>
</div>
</div>

<!-- back to top -->
<div style="position:absolute;left:1220px;top:574px;width:27px;height:26px;border-radius:4px;background:#fff;box-shadow:0 0 4px rgba(255,140,40,.22)"></div>
<svg style="position:absolute;left:1228px;top:581px;width:11px;height:12px;fill:none;stroke:#4c4e54;stroke-width:1.1;stroke-linecap:round;stroke-linejoin:round" viewBox="0 0 11 12"><path d="M5.5 11V1.2M1.5 5.2L5.5 1.2L9.5 5.2"/></svg>
<!-- window corner arcs -->
<div style="position:absolute;left:0;top:0;width:7px;height:7px;border-top-left-radius:6px;border-left:1px solid rgba(0,0,0,.11);border-top:1px solid rgba(0,0,0,.11)"></div>
<div style="position:absolute;right:0;top:0;width:7px;height:7px;border-top-right-radius:6px;border-right:1px solid rgba(0,0,0,.11);border-top:1px solid rgba(0,0,0,.11)"></div>
<div style="position:absolute;left:0;bottom:0;width:7px;height:7px;border-bottom-left-radius:6px;border-left:1px solid rgba(0,0,0,.11);border-bottom:1px solid rgba(0,0,0,.11)"></div>
<div style="position:absolute;right:0;bottom:0;width:7px;height:7px;border-bottom-right-radius:6px;border-right:1px solid rgba(0,0,0,.16);border-bottom:1px solid rgba(0,0,0,.16)"></div>
</body></html>
